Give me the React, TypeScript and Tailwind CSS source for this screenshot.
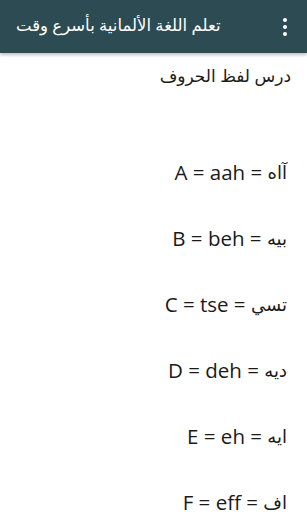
import React from "react";

const rows = [
  ["A = aah = ", "آاه"],
  ["B = beh = ", "بيه"],
  ["C = tse = ", "تسي"],
  ["D = deh = ", "ديه"],
  ["E = eh = ", "ايه"],
  ["F = eff = ", "اف"],
];

export default function App() {
  return (
    <div className="w-[307px] h-[512px] overflow-hidden bg-white font-['Open_Sans','DejaVu_Sans',sans-serif]">
      <div className="h-[53px] bg-[#2d4b52] flex items-center justify-between pl-4 pr-[20px] shadow-[0_2px_3px_rgba(0,0,0,0.25)] relative z-10">
        <span className="text-white text-[16.5px] leading-none pb-[2px]" dir="rtl">
          تعلم اللغة الألمانية بأسرع وقت
        </span>
        <div className="flex flex-col gap-[3px]">
          <span className="w-[4px] h-[4px] rounded-full bg-white" />
          <span className="w-[4px] h-[4px] rounded-full bg-white" />
          <span className="w-[4px] h-[4px] rounded-full bg-white" />
        </div>
      </div>
      <div className="pr-4 pt-[10px] text-right text-[#1a1a1a]">
        <div className="text-[17px] leading-[26px]" dir="rtl">
          درس لفظ الحروف
        </div>
        <div className="flex flex-col gap-[40px] pt-[70px]">
          {rows.map(([l, a]) => (
            <div key={l} className="h-[26px] flex items-center justify-end pr-[4px]">
              <span className="text-[20.5px] leading-none whitespace-pre">{l}</span>
              <span className="text-[18px] leading-none">{a}</span>
            </div>
          ))}
        </div>
      </div>
    </div>
  );
}
